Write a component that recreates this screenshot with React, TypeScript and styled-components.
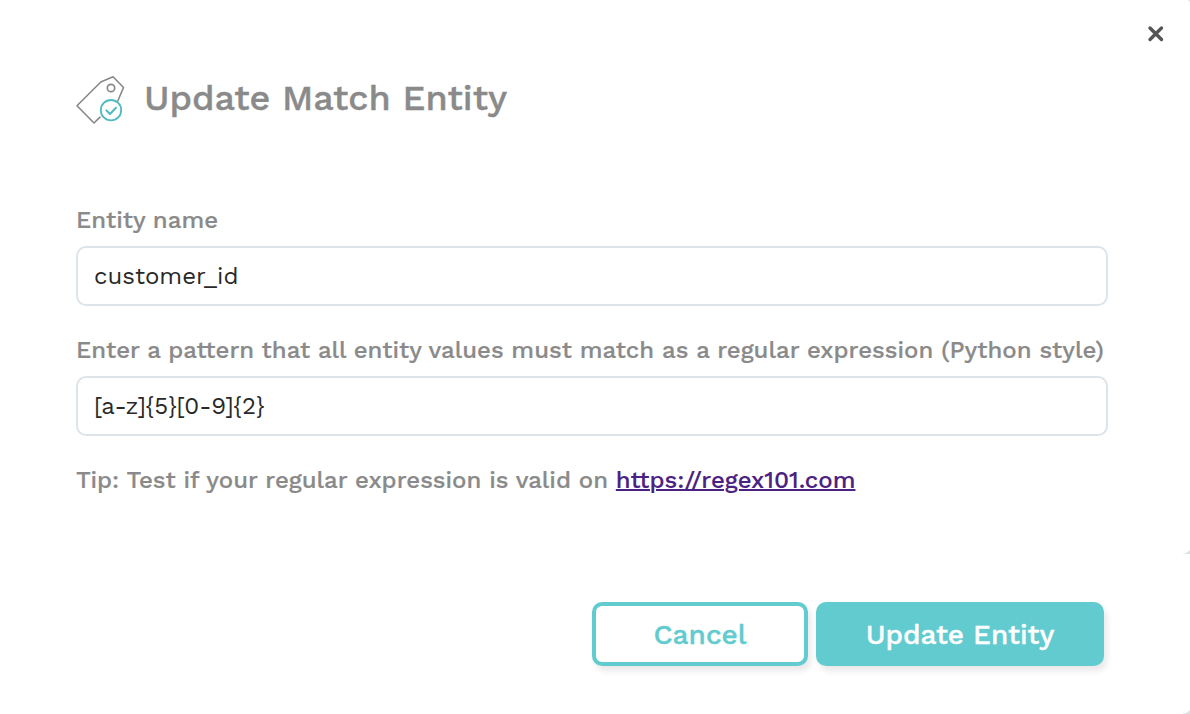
import React from 'react';
import styled, { createGlobalStyle } from 'styled-components';

const Global = createGlobalStyle`
  * { box-sizing: border-box; }
  body { margin: 0; background: #dde1e1; font-family: "Work Sans", Inter, sans-serif; }
`;

const Viewport = styled.main`
  width: 1190px;
  height: 714px;
  overflow: hidden;
`;

const Dialog = styled.div`
  width: 1192px;
  height: 716px;
  margin-top: -2px;
  display: flex;
  flex-direction: column;
`;

const Panel = styled.section`
  background: #fff;
  border-bottom-right-radius: 10px;
`;

const Body = styled(Panel)`
  height: 556px;
  padding: 24px 84px 0 76px;
  border-top-right-radius: 10px;
`;

const Footer = styled(Panel)`
  height: 160px;
  padding: 48px 88px 0;
  display: flex;
  justify-content: flex-end;
  gap: 8px;
`;

const CloseRow = styled.div`
  display: flex;
  justify-content: flex-end;
  margin-right: -60px;
  height: 24px;
`;

const CloseButton = styled.button`
  width: 24px;
  height: 24px;
  padding: 0;
  border: 0;
  background: none;
`;

const Heading = styled.header`
  display: flex;
  align-items: center;
  gap: 19px;
  height: 52px;
  margin: 28px 0 80px;
`;

const Title = styled.h1`
  margin: 0 0 4px;
  font-size: 36px;
  line-height: 44px;
  font-weight: 500;
  color: #8a8a8a;
  -webkit-text-stroke: 0.4px currentColor;
  white-space: nowrap;
`;

const Label = styled.label`
  display: block;
  height: 40px;
  line-height: 28px;
  font-size: 24px;
  font-weight: 500;
  color: #8a8a8a;
  -webkit-text-stroke: 0.2px currentColor;
  white-space: nowrap;
`;

const Input = styled.input`
  display: block;
  width: 1032px;
  height: 60px;
  margin-bottom: 30px;
  padding: 0 16px;
  border: 2px solid #dde4e9;
  border-radius: 10px;
  outline: 0;
  background: #fff;
  font-family: inherit;
  font-size: 24px;
  color: #292929;
`;

const Tip = styled.p`
  margin: 30px 0 0;
  line-height: 28px;
  font-size: 24px;
  font-weight: 500;
  color: #8a8a8a;
  -webkit-text-stroke: 0.2px currentColor;
  white-space: nowrap;
`;

const Link = styled.a`
  color: #4b2182;
  -webkit-text-stroke: 0.1px currentColor;
  text-decoration: underline;
  text-decoration-thickness: 2px;
`;

const Button = styled.button<{ $filled?: boolean }>`
  width: ${(p) => (p.$filled ? 288 : 216)}px;
  height: 64px;
  padding: 0;
  border: 4px solid #62cbcf;
  border-radius: 10px;
  background: ${(p) => (p.$filled ? '#62cbcf' : '#fff')};
  color: ${(p) => (p.$filled ? '#fff' : '#62cbcf')};
  -webkit-text-stroke: 0.35px currentColor;
  box-shadow: 3px 5px 6px rgba(0, 0, 0, 0.09);
  font-family: inherit;
  font-size: 28px;
  font-weight: 500;
`;

const TagIcon = () => (
  <svg width="49" height="52" viewBox="0 0 49 52" fill="none" strokeLinecap="round" strokeLinejoin="round">
    <path d="M24 43.2L18 49L1 31.7L24.8 8L37 2.8L47.5 13.5L41.8 27" stroke="#888" strokeWidth="1.6" />
    <circle cx="35" cy="14" r="3.7" stroke="#888" strokeWidth="1.7" />
    <circle cx="35" cy="36.2" r="10.2" stroke="#4fbabf" strokeWidth="1.8" />
    <path d="M30.4 36.4L34 40L40 33.8" stroke="#4fbabf" strokeWidth="2" />
  </svg>
);

const App = () => (
  <>
    <Global />
    <Viewport>
      <Dialog>
        <Body>
          <CloseRow>
            <CloseButton aria-label="Close">
              <svg width="24" height="24" viewBox="0 0 24 24" stroke="#555" strokeWidth="3.4" strokeLinecap="round">
                <path d="M6 6L17.5 17.5M17.5 6L6 17.5" />
              </svg>
            </CloseButton>
          </CloseRow>
          <Heading>
            <TagIcon />
            <Title>Update Match Entity</Title>
          </Heading>
          <Label htmlFor="name">Entity name</Label>
          <Input id="name" defaultValue="customer_id" />
          <Label htmlFor="pattern">
            Enter a pattern that all entity values must match as a regular expression (Python style)
          </Label>
          <Input id="pattern" defaultValue="[a-z]{5}[0-9]{2}" />
          <Tip>
            Tip: Test if your regular expression is valid on <Link href="https://regex101.com">https://regex101.com</Link>
          </Tip>
        </Body>
        <Footer>
          <Button>Cancel</Button>
          <Button $filled>Update Entity</Button>
        </Footer>
      </Dialog>
    </Viewport>
  </>
);

export default App;
